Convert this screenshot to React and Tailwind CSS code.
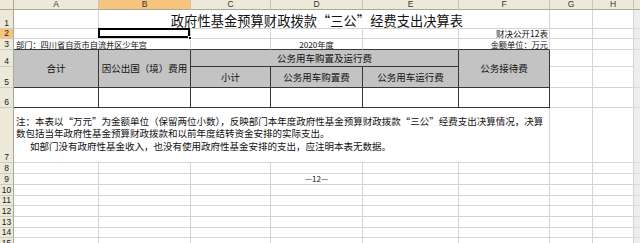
import React from "react";

// column widths (right border included), A..H; column I takes the rest
const colW = ["w-[85px]", "w-[92px]", "w-[80px]", "w-[92px]", "w-[96px]", "w-[91px]", "w-[43px]", "w-[41px]"];
const letters = ["A", "B", "C", "D", "E", "F", "G", "H"];

const grid = "border-[#d4d4d4]";
const dark = "border-[#363636]";

const Cell = ({ w, line = grid, className = "", children }) => (
  <div className={`shrink-0 box-border border-r border-b h-full ${w} ${line} ${className}`}>{children}</div>
);

const RowHead = ({ n, sel, className = "" }) => (
  <div
    className={`shrink-0 w-[14px] box-border border-r border-b border-r-[#aca899] border-b-[#cfccbc] overflow-hidden flex items-end justify-center text-[8.5px] leading-[9px] text-[#222] ${
      sel ? "bg-[#f6c47c]" : "bg-[#ece9d8]"
    } ${className}`}
    style={{ fontFamily: '"Liberation Sans", sans-serif' }}
  >
    {n}
  </div>
);

const Rest = ({ className = "" }) => (
  <div className={`flex-1 h-full box-border border-b border-[#dcdcdc] bg-[#ededed] ${className}`} />
);

const Row = ({ n, h, sel, children }) => (
  <div className={`flex shrink-0 ${h}`}>
    <RowHead n={n} sel={sel} />
    {children}
  </div>
);

const Blank = ({ n, h }) => (
  <Row n={n} h={h}>
    {colW.map((w, i) => (
      <Cell key={i} w={w} />
    ))}
    <Rest />
  </Row>
);

export default function App() {
  return (
    <div
      className="w-[640px] h-[243px] overflow-hidden bg-white flex flex-col text-[#111]"
      style={{ fontFamily: '"Noto Sans CJK SC", "Liberation Sans", sans-serif' }}
    >
      {/* column letters */}
      <div className="flex shrink-0 h-[10px]">
        <div className="shrink-0 w-[14px] box-border border-r border-b border-[#aca899] bg-[#ece9d8]" />
        {colW.map((w, i) => (
          <div
            key={i}
            className={`shrink-0 ${w} box-border border-r border-b border-r-[#c9c6b6] border-b-[#aca899] overflow-hidden flex items-center justify-center text-[8.5px] leading-none text-[#333] ${
              i === 1 ? "bg-[#f6c47c]" : "bg-[#ece9d8]"
            }`}
            style={{ fontFamily: '"Liberation Sans", sans-serif' }}
          >
            {letters[i]}
          </div>
        ))}
        <div className="flex-1 box-border border-b border-[#aca899] bg-[#ece9d8]" />
      </div>

      {/* 1: title */}
      <Row n="1" h="h-[19px]">
        <Cell w={colW[0]} />
        <div className={`shrink-0 w-[451px] h-full box-border border-r border-b ${grid} flex items-end justify-center pb-[1px]`}>
          <span className="text-[13.2px] leading-none tracking-[0.1px] pr-[14px]">政府性基金预算财政拨款“三公”经费支出决算表</span>
        </div>
        <Cell w={colW[6]} />
        <Cell w={colW[7]} />
        <Rest />
      </Row>

      {/* 2 */}
      <Row n="2" h="h-[10px]" sel>
        <Cell w={colW[0]} />
        <Cell w={colW[1]} className="relative">
          <div className="absolute -left-[1px] -top-[1px] right-0 bottom-0 border-2 border-black" />
          <div className="absolute -right-[2px] -bottom-[2px] w-[4px] h-[4px] bg-black border border-white" />
        </Cell>
        <Cell w={colW[2]} />
        <Cell w={colW[3]} />
        <Cell w={colW[4]} />
        <Cell w={colW[5]} className="flex items-center justify-end pr-[1px]">
          <span className="text-[8.5px] leading-[9px] whitespace-nowrap">财决公开12表</span>
        </Cell>
        <Cell w={colW[6]} />
        <Cell w={colW[7]} />
        <Rest />
      </Row>

      {/* 3 */}
      <Row n="3" h="h-[11px]">
        <div className={`shrink-0 w-[177px] h-full box-border border-r border-b ${grid} border-b-[#363636] flex items-end pl-[2px]`}>
          <span className="text-[8.2px] leading-[10px] whitespace-nowrap">部门：四川省自贡市自流井区少年宫</span>
        </div>
        <Cell w={colW[2]} className="border-b-[#363636]" />
        <Cell w={colW[3]} className="border-b-[#363636] flex items-end justify-center">
          <span className="text-[8.2px] leading-[10px] whitespace-nowrap">2020年度</span>
        </Cell>
        <Cell w={colW[4]} className="border-b-[#363636]" />
        <Cell w={colW[5]} className="border-b-[#363636] flex items-end justify-end pr-[1px]">
          <span className="text-[8.2px] leading-[10px] whitespace-nowrap">金额单位：万元</span>
        </Cell>
        <Cell w={colW[6]} />
        <Cell w={colW[7]} />
        <Rest />
      </Row>

      {/* 4-5: table head */}
      <div className="flex shrink-0 h-[38px]">
        <div className="flex flex-col shrink-0">
          <RowHead n="4" className="h-[17px] border-r-[#363636]" />
          <RowHead n="5" className="h-[21px] border-r-[#363636]" />
        </div>
        <Cell w={colW[0]} line={dark} className="bg-[#c3c3c3] flex items-center justify-center text-[9.5px]">
          合计
        </Cell>
        <Cell w={colW[1]} line={dark} className="bg-[#c3c3c3] flex items-center justify-center text-[9.5px] whitespace-nowrap">
          因公出国（境）费用
        </Cell>
        <div className="flex flex-col shrink-0 w-[268px] h-full">
          <div className={`h-[17px] box-border border-r border-b ${dark} bg-[#c3c3c3] flex items-center justify-center text-[9.5px]`}>
            公务用车购置及运行费
          </div>
          <div className="flex h-[21px]">
            <Cell w={colW[2]} line={dark} className="bg-[#c3c3c3] flex items-center justify-center text-[9.5px]">
              小计
            </Cell>
            <Cell w={colW[3]} line={dark} className="bg-[#c3c3c3] flex items-center justify-center text-[9.5px]">
              公务用车购置费
            </Cell>
            <Cell w={colW[4]} line={dark} className="bg-[#c3c3c3] flex items-center justify-center text-[9.5px]">
              公务用车运行费
            </Cell>
          </div>
        </div>
        <Cell w={colW[5]} line={dark} className="bg-[#c3c3c3] flex items-center justify-center text-[9.5px]">
          公务接待费
        </Cell>
        <div className="flex flex-col shrink-0">
          <div className={`h-[17px] w-[43px] box-border border-r border-b ${grid}`} />
          <div className={`h-[21px] w-[43px] box-border border-r border-b ${grid}`} />
        </div>
        <div className="flex flex-col shrink-0">
          <div className={`h-[17px] w-[41px] box-border border-r border-b ${grid}`} />
          <div className={`h-[21px] w-[41px] box-border border-r border-b ${grid}`} />
        </div>
        <div className="flex flex-col flex-1">
          <Rest className="h-[17px] flex-none" />
          <Rest className="h-[21px] flex-none" />
        </div>
      </div>

      {/* 6: data row */}
      <div className="flex shrink-0 h-[20px]">
        <RowHead n="6" className="border-r-[#363636]" />
        {colW.slice(0, 6).map((w, i) => (
          <Cell key={i} w={w} line={dark} />
        ))}
        <Cell w={colW[6]} />
        <Cell w={colW[7]} />
        <Rest />
      </div>

      {/* 7: note */}
      <Row n="7" h="h-[55px]">
        <div className={`shrink-0 w-[536px] h-full box-border border-r border-b ${grid} flex flex-col justify-center pl-[2px] text-[9.5px] leading-[12.5px] whitespace-nowrap pb-[3px]`}>
          <span>注：本表以“万元”为金额单位（保留两位小数），反映部门本年度政府性基金预算财政拨款“三公”经费支出决算情况，决算</span>
          <span>数包括当年政府性基金预算财政拨款和以前年度结转资金安排的实际支出。</span>
          <span className="pl-[14px]">如部门没有政府性基金收入，也没有使用政府性基金安排的支出，应注明本表无数据。</span>
        </div>
        <Cell w={colW[6]} />
        <Cell w={colW[7]} />
        <Rest />
      </Row>

      <Blank n="8" h="h-[11px]" />

      {/* 9: page number */}
      <Row n="9" h="h-[11px]">
        <Cell w={colW[0]} />
        <Cell w={colW[1]} />
        <Cell w={colW[2]} />
        <Cell w={colW[3]} className="flex items-end justify-center">
          <span className="text-[8px] leading-[10px] whitespace-nowrap">—12—</span>
        </Cell>
        <Cell w={colW[4]} />
        <Cell w={colW[5]} />
        <Cell w={colW[6]} />
        <Cell w={colW[7]} />
        <Rest />
      </Row>

      <Blank n="10" h="h-[11px]" />
      <Blank n="11" h="h-[10px]" />
      <Blank n="12" h="h-[11px]" />
      <Blank n="13" h="h-[11px]" />
      <Blank n="14" h="h-[10px]" />
      <Blank n="15" h="h-[11px]" />
    </div>
  );
}
